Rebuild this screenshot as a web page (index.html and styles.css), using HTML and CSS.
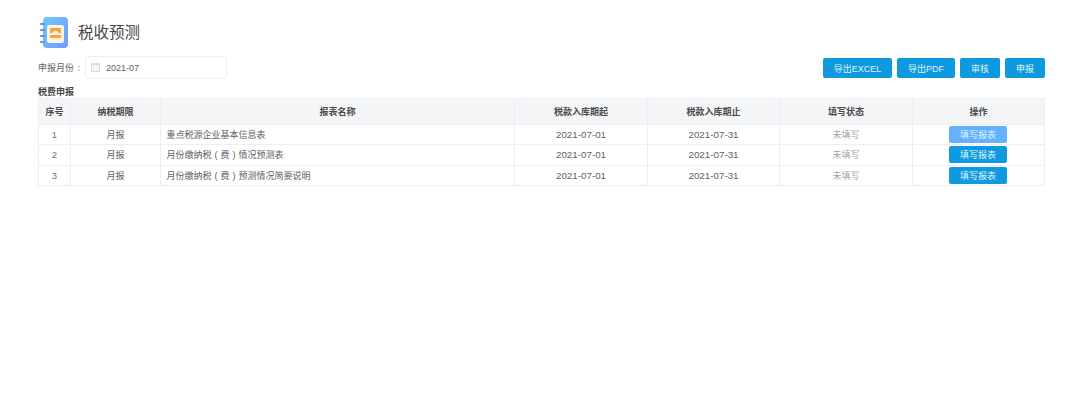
FILE: index.html
```html
<!DOCTYPE html>
<html lang="zh">
<head>
<meta charset="utf-8">
<title>税收预测</title>
<link rel="stylesheet" href="styles.css">
</head>
<body>
<div class="page">
  <header class="title-row">
    <svg class="logo" width="30" height="34" viewBox="0 0 30 34" aria-hidden="true">
      <defs>
        <linearGradient id="g" x1="0" y1="0" x2="1" y2="1">
          <stop offset="0" stop-color="#6fc8fb"/>
          <stop offset="1" stop-color="#6d9bff"/>
        </linearGradient>
      </defs>
      <rect x="3" y="1" width="25" height="31" rx="4" fill="url(#g)"/>
      <rect x="0" y="7" width="5" height="2" rx="1" fill="#5d8ff0"/>
      <rect x="0" y="13" width="5" height="2" rx="1" fill="#5d8ff0"/>
      <rect x="0" y="19" width="5" height="2" rx="1" fill="#5d8ff0"/>
      <rect x="0" y="25" width="5" height="2" rx="1" fill="#5d8ff0"/>
      <rect x="7" y="9" width="17" height="18" rx="2" fill="#fdf3e4"/>
      <path d="M10 17 L10 12 L21 12 L21 17 L18.500 17 C17.500 14 13.500 14 12.500 17 Z" fill="#f6a53c"/>
      <rect x="10" y="19" width="11" height="3" fill="#f6a53c"/>
    </svg>
    <h1 class="title">税收预测</h1>
  </header>

  <div class="toolbar">
    <div class="filter">
      <span class="filter-label">申报月份 :</span>
      <div class="date-input">
        <svg class="cal" width="9" height="9" viewBox="0 0 9 9" aria-hidden="true">
          <rect x="0.500" y="0.500" width="8" height="8" fill="#f5f5f5" stroke="#ddd6d2"/>
          <rect x="0.500" y="0.500" width="8" height="2" fill="#ebdfda"/>
        </svg>
        <span class="date-value">2021-07</span>
      </div>
    </div>
    <div class="actions">
      <button class="btn btn-excel">导出EXCEL</button>
      <button class="btn btn-pdf">导出PDF</button>
      <button class="btn btn-small">审核</button>
      <button class="btn btn-small">申报</button>
    </div>
  </div>

  <div class="section-title">税费申报</div>

  <table class="grid">
    <colgroup>
      <col class="c-no"><col class="c-period"><col class="c-name">
      <col class="c-w133"><col class="c-w132"><col class="c-w133"><col class="c-w132">
    </colgroup>
    <thead>
      <tr><th>序号</th><th>纳税期限</th><th>报表名称</th><th>税款入库期起</th><th>税款入库期止</th><th>填写状态</th><th>操作</th></tr>
    </thead>
    <tbody>
      <tr>
        <td class="no first">1</td><td>月报</td><td class="name">重点税源企业基本信息表</td>
        <td class="date">2021-07-01</td><td class="date">2021-07-31</td><td class="status">未填写</td>
        <td><button class="fill fill-active">填写报表</button></td>
      </tr>
      <tr>
        <td class="no">2</td><td>月报</td><td class="name">月份缴纳税 ( 费 ) 情况预测表</td>
        <td class="date">2021-07-01</td><td class="date">2021-07-31</td><td class="status">未填写</td>
        <td><button class="fill">填写报表</button></td>
      </tr>
      <tr>
        <td class="no">3</td><td>月报</td><td class="name">月份缴纳税 ( 费 ) 预测情况简要说明</td>
        <td class="date">2021-07-01</td><td class="date">2021-07-31</td><td class="status">未填写</td>
        <td><button class="fill">填写报表</button></td>
      </tr>
    </tbody>
  </table>
</div>
</body>
</html>
```

FILE: styles.css
```css
* { box-sizing: border-box; }
html, body { margin: 0; padding: 0; background: #fff; }
body {
  font-family: "Liberation Sans", "Noto Sans CJK SC", sans-serif;
  color: #606266;
  font-size: 9px;
}
.page { width: 1080px; height: 410px; padding: 16px 35px 0 38px; overflow: hidden; }

.title-row { display: flex; align-items: center; height: 34px; padding-left: 2px; gap: 8px; }
.logo { flex: none; }
.title { margin: 0; font-size: 15.500px; font-weight: 400; color: #41464e; line-height: 34px; }

.toolbar { display: flex; justify-content: space-between; align-items: center; margin-top: 6px; height: 23px; }
.filter { display: flex; align-items: center; }
.filter-label { width: 47px; font-size: 9px; color: #606266; word-spacing: 1px; }
.date-input {
  width: 142px; height: 23px; border: 1px solid #eceef2; border-radius: 3px;
  display: flex; align-items: center; padding-left: 5px; gap: 6px;
}
.date-value { font-size: 9px; color: #606266; }
.actions { display: flex; gap: 5px; margin-top: 1px; }
.btn {
  height: 20px; padding: 0; border: 0; border-radius: 2px; background: #0f9ae0; color: #dff3fc;
  font: 9px "Liberation Sans", "Noto Sans CJK SC", sans-serif;
}
.btn-excel { width: 69px; }
.btn-pdf { width: 58px; }
.btn-small { width: 40px; }

.section-title { margin-top: 8px; height: 11px; line-height: 11px; font-size: 9px; font-weight: 700; color: #44474c; }

.grid { border-collapse: collapse; table-layout: fixed; width: 1006px; }
.c-no { width: 32px; }
.c-period { width: 90px; }
.c-name { width: 354px; }
.c-w133 { width: 133px; }
.c-w132 { width: 132px; }
.grid th, .grid td { border: 1px solid #ebeef5; text-align: center; padding: 0; font-size: 9px; }
.grid th { height: 26px; background: #f4f5f7; color: #4a4a4a; font-weight: 700; }
.grid td { height: 20.300px; color: #606266; }
.grid td.name { text-align: left; padding-left: 5.500px; word-spacing: 0.500px; }
.grid td.date { font-size: 9.800px; }
.grid td.no { color: #707070; font-size: 9.500px; }
.grid td.first { color: #a0663c; }
.grid td.status { color: #a3a3a3; }
.fill {
  display: block; margin: 0 0 0 36px; width: 58px; height: 17px; padding: 0; border: 0; border-radius: 2px;
  background: #0f9ae0; color: #dff3fc; font: 9px "Liberation Sans", "Noto Sans CJK SC", sans-serif;
}
.fill-active { background: #66b1ff; }
```
